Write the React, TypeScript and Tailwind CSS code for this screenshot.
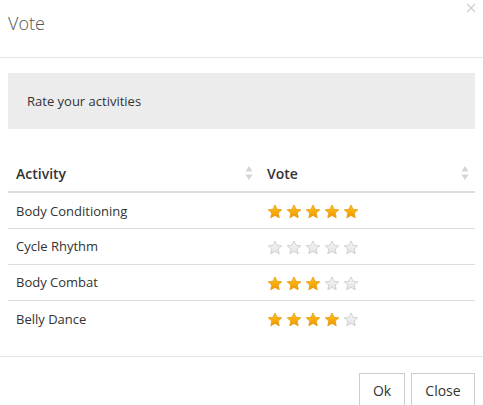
import React from 'react';

interface Activity {
  name: string;
  vote: number;
}

const activities: Activity[] = [
  { name: 'Body Conditioning', vote: 5 },
  { name: 'Cycle Rhythm', vote: 0 },
  { name: 'Body Combat', vote: 3 },
  { name: 'Belly Dance', vote: 4 },
];

const Star: React.FC<{ filled: boolean }> = ({ filled }) => (
  <svg width="16" height="15" viewBox="0 0 24 23" className="block">
    <defs>
      <linearGradient id="starGold" x1="0" y1="0" x2="0" y2="1">
        <stop offset="0%" stopColor="#ffc61a" />
        <stop offset="100%" stopColor="#ee9400" />
      </linearGradient>
      <linearGradient id="starGrey" x1="0" y1="0" x2="0" y2="1">
        <stop offset="0%" stopColor="#f7f7f7" />
        <stop offset="100%" stopColor="#e2e2e2" />
      </linearGradient>
    </defs>
    <path
      d="M12 1.5l3.1 6.6 7.3.8-5.5 5 1.6 7.3L12 17.5l-6.5 3.7 1.6-7.3-5.5-5 7.3-.8z"
      fill={filled ? 'url(#starGold)' : 'url(#starGrey)'}
      stroke={filled ? '#e69a10' : '#c8c8c8'}
      strokeWidth="1.2"
      strokeLinejoin="round"
    />
  </svg>
);

const SortIcon: React.FC = () => (
  <svg width="8" height="16" viewBox="0 0 8 16" className="block">
    <path d="M4 1 L7.5 6.5 H0.5 Z" fill="#d6d6d6" />
    <path d="M4 15 L7.5 9.5 H0.5 Z" fill="#d6d6d6" />
  </svg>
);

const App: React.FC = () => {
  return (
    <div className="w-[483px] h-[405px] bg-white relative overflow-hidden font-['Open_Sans',sans-serif] text-[#333]">
      {/* header */}
      <div className="h-[58px] border-b border-[#e5e5e5] px-2 pt-[10px]">
        <h4 className="text-[18px] font-light text-[#555] leading-[26px]">Vote</h4>
      </div>
      <button className="absolute top-[3px] right-[7px] w-[10px] h-[10px]">
        <svg width="10" height="10" viewBox="0 0 10 10" className="block">
          <path d="M1 1 L9 9 M9 1 L1 9" stroke="#cfcfcf" strokeWidth="1.3" />
        </svg>
      </button>

      {/* body */}
      <div className="px-2 pt-[15px]">
        <div className="h-[56px] bg-[#ececec] pl-[19px] pt-[1px] flex items-center text-[13px]">
          Rate your activities
        </div>

        <table className="w-full mt-[26px] border-collapse text-[13px]">
          <thead>
            <tr className="h-[37px] border-b-2 border-[#dddddd]">
              <th className="w-[250px] pl-2 pr-[5px] text-left font-semibold text-[14px]">
                <div className="flex items-center justify-between">
                  <span>Activity</span>
                  <SortIcon />
                </div>
              </th>
              <th className="pl-[9px] pr-[6px] text-left font-semibold text-[14px]">
                <div className="flex items-center justify-between">
                  <span>Vote</span>
                  <SortIcon />
                </div>
              </th>
            </tr>
          </thead>
          <tbody>
            {activities.map((a, i) => (
              <tr
                key={a.name}
                className={i < activities.length - 1 ? 'h-[36px] border-b border-[#dddddd]' : 'h-[36px]'}
              >
                <td className="pl-2 pt-[2px]">{a.name}</td>
                <td className="pl-[9px]">
                  <div className="flex gap-[3px] pt-[3px]">
                    {[1, 2, 3, 4, 5].map((n) => (
                      <Star key={n} filled={n <= a.vote} />
                    ))}
                  </div>
                </td>
              </tr>
            ))}
          </tbody>
        </table>
      </div>

      {/* footer */}
      <div className="absolute left-0 right-0 top-[356px] border-t border-[#e5e5e5] flex justify-end gap-[6px] px-2 pt-4">
        <button className="h-[34px] w-[46px] border border-[#cccccc] bg-white text-[14px] text-[#333]">Ok</button>
        <button className="h-[34px] w-[64px] border border-[#cccccc] bg-white text-[14px] text-[#333]">Close</button>
      </div>
    </div>
  );
};

export default App;
